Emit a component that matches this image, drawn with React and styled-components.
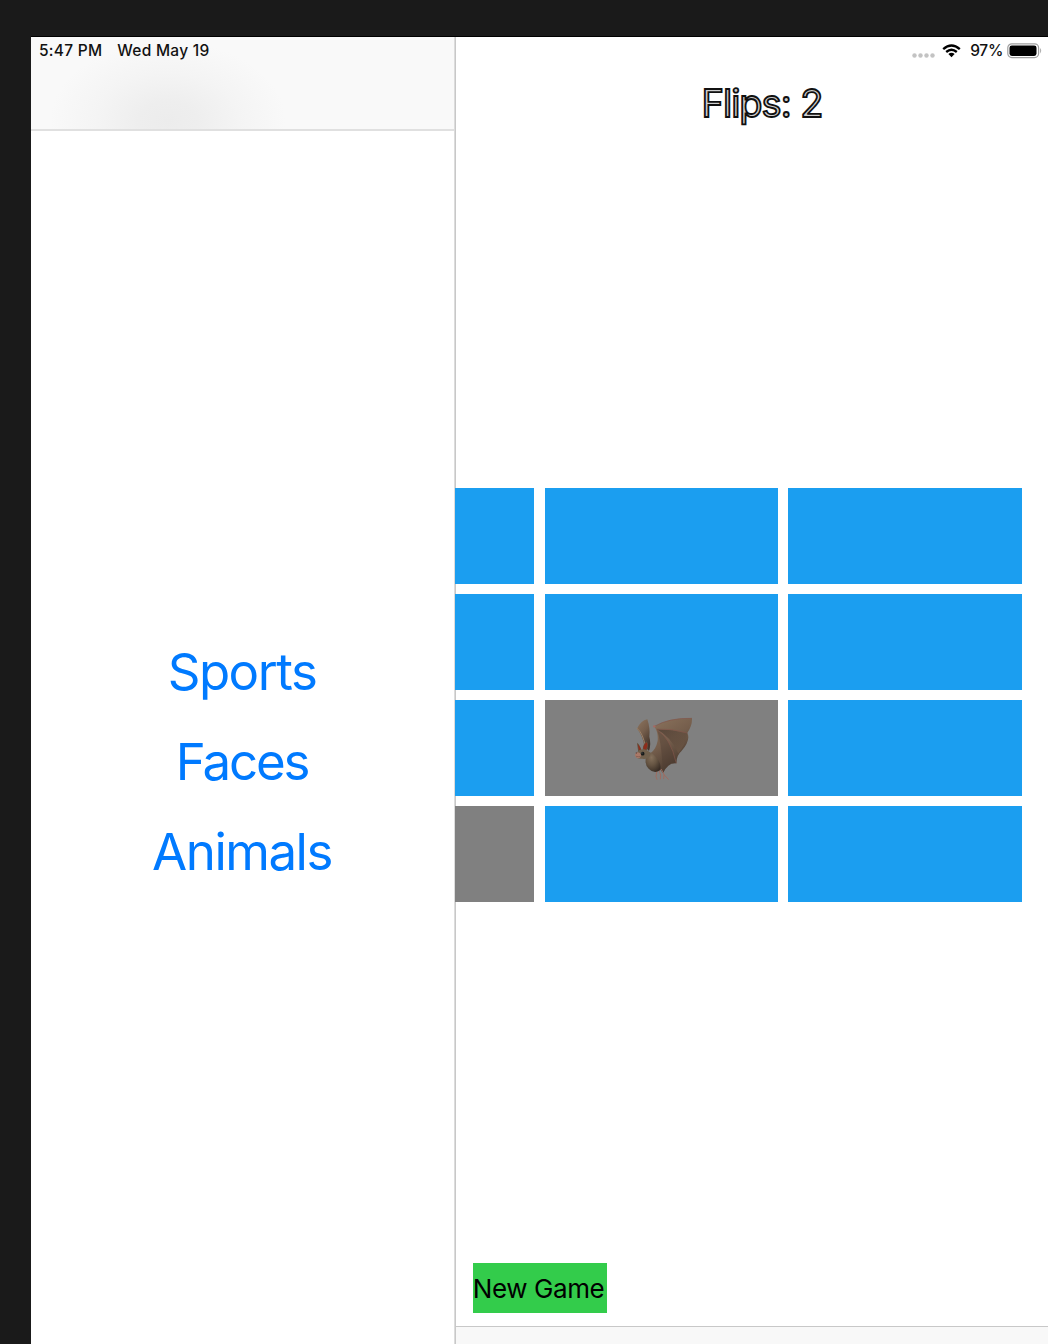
import React from "react";
import styled, { createGlobalStyle } from "styled-components";

const GlobalStyle = createGlobalStyle`
  * { box-sizing: border-box; }
  html, body { margin: 0; background: #1a1a1a; }
  body { font-family: Inter, "Liberation Sans", sans-serif; overflow: hidden; }
`;

const Desktop = styled.div`
  height: 1344px;
  padding: 36px 0 0 31px;
  background: #1a1a1a;
`;

const Screen = styled.div`
  display: flex;
  height: 1308px;
  border-top: 1px solid #000;
  background: #fff;
`;

const Sidebar = styled.aside`
  display: flex;
  flex-direction: column;
  width: 424px;
  flex: none;
  border-right: 1px solid #dcdcdc;
`;

const NavBar = styled.header`
  height: 94px;
  flex: none;
  padding: 4px 8px;
  border-bottom: 2px solid #e0e0e0;
  background: radial-gradient(ellipse 118px 80px at 137px 84px, #ececec 0%, #eeeeee 25%, #f4f4f4 60%, #f9f9f9 100%);
`;

const StatusLeft = styled.div`
  display: flex;
  gap: 15px;
  font-size: 15.5px;
  line-height: 20px;
  font-weight: 500;
  color: #111;
`;

const StatusText = styled.span`
  letter-spacing: ${(p) => p.$track || 0}px;
  white-space: nowrap;
`;

const Themes = styled.nav`
  display: flex;
  flex-direction: column;
  align-items: center;
  padding: 496px 1px 0 0;
`;

const ThemeButton = styled.button`
  height: 90px;
  padding: 0;
  border: 0;
  background: none;
  font: 400 51px/90px Inter, "Liberation Sans", sans-serif;
  letter-spacing: ${(p) => p.$track}px;
  color: #007aff;
`;

const Detail = styled.main`
  display: flex;
  flex-direction: column;
  flex: 1;
  min-width: 0;
  overflow: hidden;
  background: linear-gradient(#c8c8c8, #c8c8c8) left / 1px 100% no-repeat, #fff;
`;

const StatusRight = styled.div`
  display: flex;
  justify-content: flex-end;
  align-items: center;
  height: 27px;
  padding-right: 5px;
  font-size: 15.5px;
  font-weight: 500;
  color: #111;
`;

const CellDots = styled.svg`
  margin: 9px 7px 0 0;
`;

const Wifi = styled.svg`
  margin-right: 9px;
`;

const Battery = styled.svg`
  margin-left: 4px;
`;

const Flips = styled.h1`
  width: 122px;
  height: 48px;
  margin: 16px 0 0 246.5px;
  font-size: 38px;
  line-height: 47px;
  font-weight: 400;
  letter-spacing: -1px;
  white-space: nowrap;
  color: #d0d0d0;
  -webkit-text-stroke: 1.8px #111;
`;

const Board = styled.section`
  display: grid;
  grid-template-columns: repeat(3, 233.3px);
  grid-auto-rows: 95.6px;
  gap: 10.4px;
  justify-content: end;
  height: 413.6px;
  margin-top: 360.3px;
  padding-right: 26.4px;
`;

const Card = styled.div`
  display: flex;
  align-items: center;
  justify-content: center;
  background: ${(p) => (p.$open ? "#808080" : "#1b9ef0")};
`;

const NewGame = styled.button`
  width: 134px;
  height: 50px;
  margin: 361px 0 0 17.5px;
  padding: 1px 2px 0 0;
  border: 0;
  background: #33cc4b;
  color: #000;
  font: 400 26px/50px Inter, "Liberation Sans", sans-serif;
  letter-spacing: -0.4px;
  white-space: nowrap;
`;

const Toolbar = styled.footer`
  height: 18px;
  margin-top: auto;
  border-top: 1px solid #c8c8c8;
  border-left: 1px solid #c8c8c8;
  background: #f8f8f8;
`;

const BatArt = styled.svg`
  flex: none;
  margin: -2px 0 0 8px;
`;

function Bat() {
  return (
    <BatArt width="90" height="85" viewBox="0 0 270 255" aria-label="bat">
      <defs>
        <linearGradient id="wing" x1="0" y1="0" x2=".5" y2="1">
          <stop offset="0" stopColor="#8c745e" />
          <stop offset=".5" stopColor="#755e4c" />
          <stop offset="1" stopColor="#44352b" />
        </linearGradient>
        <linearGradient id="membrane" x1="0" y1="0" x2="1" y2="1">
          <stop offset="0" stopColor="#3e3028" />
          <stop offset="1" stopColor="#78604c" />
        </linearGradient>
        <radialGradient id="fur" cx=".4" cy=".3" r=".75">
          <stop offset="0" stopColor="#84705b" />
          <stop offset=".5" stopColor="#655442" />
          <stop offset="1" stopColor="#392d25" />
        </radialGradient>
      </defs>
      <path d="M51 71Q62 47 82 43Q91 70 88 95Q94 117 87 138L73 122Q68 91 51 71Z" fill="url(#wing)" />
      <path d="M50 69Q70 85 76 126" stroke="#9b8068" strokeWidth="3" fill="none" />
      <path d="M103 65Q144 38 216 40Q217 61 202 84Q213 105 184 139Q170 150 169 175Q145 171 129 204L107 177Q106 149 91 145Q108 133 113 107Q115 81 103 65Z" fill="url(#wing)" />
      <path d="M110 73Q157 74 202 84Q197 118 175 145Q151 94 110 73Z" fill="url(#membrane)" opacity=".6" />
      <path d="M111 74Q151 101 169 175Q145 171 129 204Q125 113 111 74Z" fill="#4e3d32" opacity=".4" />
      <path d="M103 64Q148 38 216 40M109 72Q157 70 202 84M111 75Q151 96 169 175" fill="none" stroke="#82544a" strokeWidth="2" />
      <circle cx="103" cy="64" r="3.5" fill="#a76861" />
      <path d="M111 194L108 215L111 223M116 194L122 210L121 222M124 193L133 210L145 223M132 210L131 221" stroke="#a0695d" strokeWidth="2.8" strokeLinecap="round" fill="none" />
      <path d="M78 139Q98 142 109 158Q126 176 120 196Q102 208 86 191Q73 179 78 157Z" fill="url(#fur)" />
      <path d="M55 143L51 113Q59 117 65 137M68 134Q69 116 80 109Q88 120 80 137" fill="#64533f" />
      <path d="M57 136L53 117Q60 124 63 135M70 132Q70 118 80 112Q86 120 78 134Z" fill="#8e2d1c" />
      <path d="M51 142Q60 130 76 134Q93 139 90 152Q82 165 67 161Q50 164 46 151Z" fill="#70604c" />
      <path d="M48 143Q59 138 63 149Q64 158 53 160Q45 157 45 150Z" fill="#aa7968" />
      <path d="M48 154Q56 156 61 154" stroke="#704b40" strokeWidth="1.5" fill="none" />
      <circle cx="68" cy="146" r="5.5" fill="#171b1b" />
      <circle cx="66" cy="144" r="1.3" fill="#b1b5b0" />
      <circle cx="49" cy="144" r="2" fill="#62443b" />
    </BatArt>
  );
}

const themes = [
  { name: "Sports", track: -1.5 },
  { name: "Faces", track: -2.2 },
  { name: "Animals", track: -1.5 },
];

const cards = Array.from({ length: 12 }, (_, i) => ({ open: i === 7 || i === 9, bat: i === 7 }));

export default function App() {
  return (
    <>
      <GlobalStyle />
      <Desktop>
        <Screen>
          <Sidebar>
            <NavBar>
              <StatusLeft>
                <StatusText $track={0.25}>5:47 PM</StatusText>
                <StatusText $track={0.27}>Wed May 19</StatusText>
              </StatusLeft>
            </NavBar>
            <Themes>
              {themes.map((t) => (
                <ThemeButton key={t.name} $track={t.track}>{t.name}</ThemeButton>
              ))}
            </Themes>
          </Sidebar>
          <Detail>
            <StatusRight>
              <CellDots width="23" height="5" viewBox="0 0 23 5">
                {[2.5, 8.5, 14.5, 20.5].map((x) => (
                  <circle key={x} cx={x} cy="2.5" r="2.2" fill="#c3c3c3" />
                ))}
              </CellDots>
              <Wifi width="19" height="14" viewBox="0 0 19 14">
                <path d="M1.2 5.1Q9.5-2.2 17.8 5.1M4.2 8Q9.5 3.6 14.8 8" fill="none" stroke="#000" strokeWidth="2.4" />
                <path d="M6.4 10.1Q9.5 7.6 12.6 10.1L9.5 13.2Z" fill="#000" />
              </Wifi>
              <StatusText $track={-0.3}>97%</StatusText>
              <Battery width="36" height="16" viewBox="0 0 36 16">
                <rect x=".8" y=".8" width="30.8" height="13.8" rx="4" fill="#fff" stroke="#a0a0a0" strokeWidth="1.2" />
                <rect x="2.5" y="2.5" width="27" height="10.4" rx="2.3" fill="#000" />
                <path d="M33.2 5Q35.2 7.7 33.2 10.4Z" fill="#a0a0a0" />
              </Battery>
            </StatusRight>
            <Flips>Flips: 2</Flips>
            <Board>
              {cards.map((c, i) => (
                <Card key={i} $open={c.open}>{c.bat && <Bat />}</Card>
              ))}
            </Board>
            <NewGame>New Game</NewGame>
            <Toolbar />
          </Detail>
        </Screen>
      </Desktop>
    </>
  );
}
